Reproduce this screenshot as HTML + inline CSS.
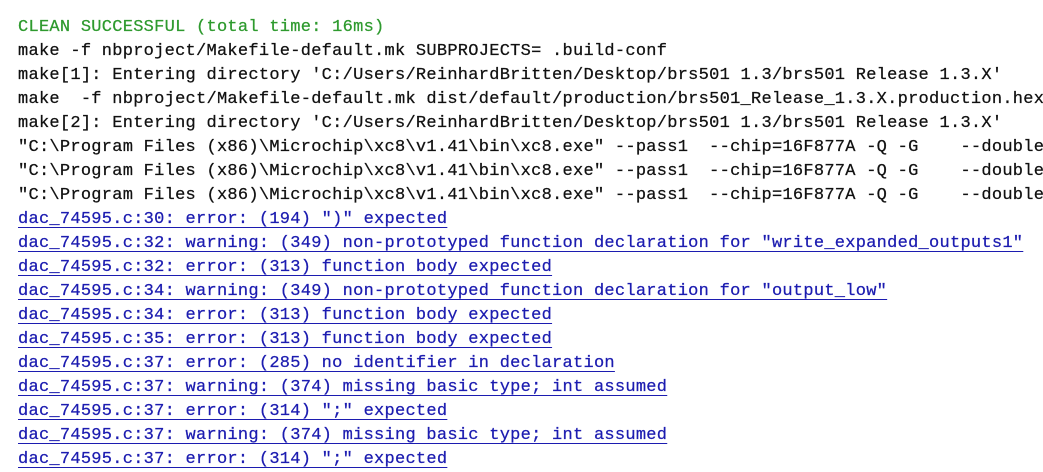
<!DOCTYPE html>
<html><head><meta charset="utf-8"><style>
html,body{margin:0;padding:0;background:#fff;width:1043px;height:469px;overflow:hidden}
.c{position:absolute;left:18px;top:16px;font-family:"Liberation Mono",monospace;font-size:17px;letter-spacing:0.27px;line-height:24px;white-space:pre;color:#111;-webkit-text-stroke:0.25px}
.g{color:#2e9a2e}
.b{color:#1c1cb0;text-decoration:underline;text-underline-offset:4px}
</style></head><body><div class="c"><div class="g">CLEAN SUCCESSFUL (total time: 16ms)</div><div>make -f nbproject/Makefile-default.mk SUBPROJECTS= .build-conf</div><div>make[1]: Entering directory 'C:/Users/ReinhardBritten/Desktop/brs501 1.3/brs501 Release 1.3.X'</div><div>make  -f nbproject/Makefile-default.mk dist/default/production/brs501_Release_1.3.X.production.hex</div><div>make[2]: Entering directory 'C:/Users/ReinhardBritten/Desktop/brs501 1.3/brs501 Release 1.3.X'</div><div>"C:\Program Files (x86)\Microchip\xc8\v1.41\bin\xc8.exe" --pass1  --chip=16F877A -Q -G    --double</div><div>"C:\Program Files (x86)\Microchip\xc8\v1.41\bin\xc8.exe" --pass1  --chip=16F877A -Q -G    --double</div><div>"C:\Program Files (x86)\Microchip\xc8\v1.41\bin\xc8.exe" --pass1  --chip=16F877A -Q -G    --double</div><div><span class="b">dac_74595.c:30: error: (194) ")" expected</span></div><div><span class="b">dac_74595.c:32: warning: (349) non-prototyped function declaration for "write_expanded_outputs1"</span></div><div><span class="b">dac_74595.c:32: error: (313) function body expected</span></div><div><span class="b">dac_74595.c:34: warning: (349) non-prototyped function declaration for "output_low"</span></div><div><span class="b">dac_74595.c:34: error: (313) function body expected</span></div><div><span class="b">dac_74595.c:35: error: (313) function body expected</span></div><div><span class="b">dac_74595.c:37: error: (285) no identifier in declaration</span></div><div><span class="b">dac_74595.c:37: warning: (374) missing basic type; int assumed</span></div><div><span class="b">dac_74595.c:37: error: (314) ";" expected</span></div><div><span class="b">dac_74595.c:37: warning: (374) missing basic type; int assumed</span></div><div><span class="b">dac_74595.c:37: error: (314) ";" expected</span></div></div></body></html>
